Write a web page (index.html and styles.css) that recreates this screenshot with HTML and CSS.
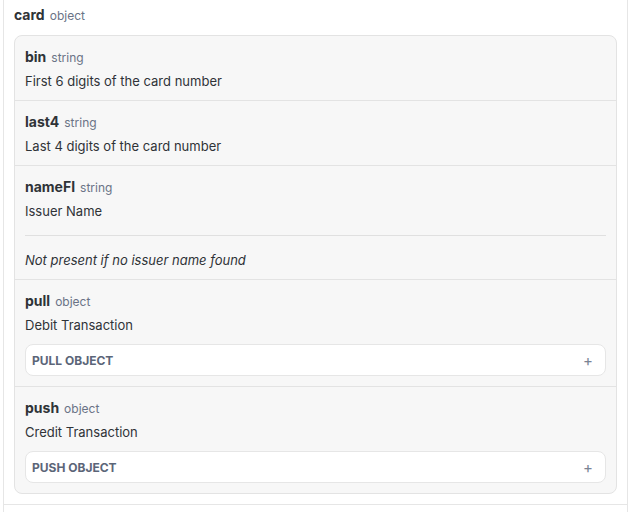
FILE: index.html
```html
<!DOCTYPE html>
<html>
<head>
<meta charset="utf-8">
<link rel="stylesheet" href="styles.css">
</head>
<body>
<div class="section">
  <div class="prop">
    <div class="head"><span class="name">card</span><span class="type">object</span></div>
    <div class="card">
      <div class="row">
        <div class="head"><span class="name">bin</span><span class="type">string</span></div>
        <p class="desc">First 6 digits of the card number</p>
      </div>
      <div class="row">
        <div class="head"><span class="name">last4</span><span class="type">string</span></div>
        <p class="desc">Last 4 digits of the card number</p>
      </div>
      <div class="row">
        <div class="head"><span class="name">nameFI</span><span class="type">string</span></div>
        <p class="desc">Issuer Name</p>
        <hr class="rule">
        <p class="desc note">Not present if no issuer name found</p>
      </div>
      <div class="row obj">
        <div class="head"><span class="name">pull</span><span class="type">object</span></div>
        <p class="desc">Debit Transaction</p>
        <button class="expand"><span>Pull object</span><span class="plus">+</span></button>
      </div>
      <div class="row obj">
        <div class="head"><span class="name">push</span><span class="type">object</span></div>
        <p class="desc">Credit Transaction</p>
        <button class="expand"><span>Push object</span><span class="plus">+</span></button>
      </div>
    </div>
  </div>
</div>
</body>
</html>
```
FILE: styles.css
```css
* { box-sizing: border-box; }
html, body { margin: 0; padding: 0; background: #fff; }
body {
  font-family: Inter, "Liberation Sans", Arial, sans-serif;
  color: #2f3337;
  -webkit-font-smoothing: antialiased;
}
.section {
  margin-left: 3px;
  width: 625px;
  height: 512px;
  border-left: 1px solid #e6e6e6;
  border-right: 1px solid #e6e6e6;
}
.prop {
  padding: 5px 10px 10px 10px;
  border-bottom: 1px solid #e6e6e6;
}
.head {
  display: flex;
  align-items: baseline;
  gap: 5px;
  height: 20px;
  line-height: 20px;
  overflow: hidden;
}
.name {
  font-weight: 700;
  font-size: 14px;
  line-height: 20px;
  color: #2f3337;
}
.type {
  font-size: 12px;
  line-height: 20px;
  color: #6a7386;
}
.prop > .head { margin-bottom: 10px; }
.card {
  background: #f7f7f7;
  border: 1px solid #e3e3e3;
  border-radius: 8px;
}
.row {
  padding: 11px 10px 9px 10px;
  border-bottom: 1px solid #e3e3e3;
}
.row:last-child { border-bottom: none; }
.desc {
  margin: 4px 0 0 0;
  font-size: 13px;
  line-height: 20px;
  color: #2f3337;
}
.note { font-style: italic; margin-top: 0; }
.rule {
  border: none;
  border-top: 1px solid #e0e0e0;
  margin: 14px 0 14px 0;
}
.obj { padding-bottom: 10px; }
.expand {
  margin-top: 9px;
  width: 100%;
  height: 32px;
  display: flex;
  align-items: center;
  justify-content: space-between;
  padding: 0 12px 0 6px;
  background: #fff;
  border: 1px solid #e6e6e6;
  border-radius: 8px;
  font-family: Inter, "Liberation Sans", Arial, sans-serif;
  font-size: 12px;
  font-weight: 700;
  text-transform: uppercase;
  color: #5b6578;
}
.plus {
  font-weight: 400;
  font-size: 15px;
  color: #7a8394;
}
```
